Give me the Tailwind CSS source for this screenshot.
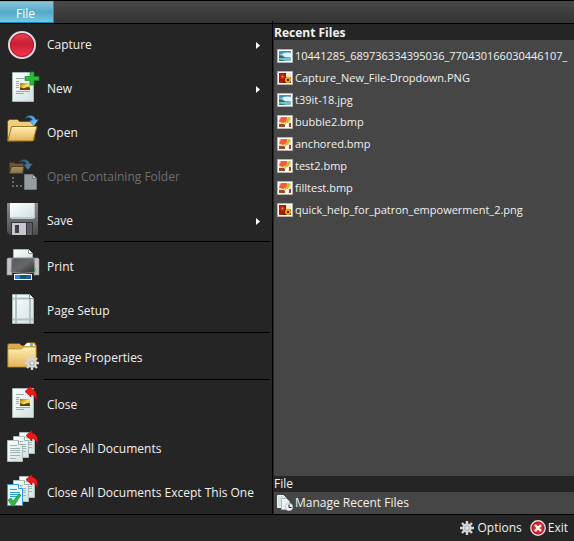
<!DOCTYPE html>
<html lang="en">
<head>
<meta charset="utf-8">
<meta name="viewport" content="width=device-width, initial-scale=1">
<title>File menu</title>
<script src="https://cdn.jsdelivr.net/npm/@tailwindcss/browser@4"></script>
</head>
<body class="flex min-h-screen flex-col bg-[#252525] font-['Open_Sans','Noto_Sans',sans-serif] text-[12px] leading-4 text-[#f1f1f1]">

<svg class="absolute size-0" aria-hidden="true">
  <defs>
    <linearGradient id="paper" x1="0" y1="0" x2="1" y2="1"><stop offset="0" stop-color="#fbffff"/><stop offset="1" stop-color="#d3e1e1"/></linearGradient>
    <linearGradient id="gold" x1="0" y1="0" x2="0" y2="1"><stop offset="0" stop-color="#ffeeb0"/><stop offset="1" stop-color="#e3b45a"/></linearGradient>
    <linearGradient id="red" x1="0" y1="0" x2="0" y2="1"><stop offset="0" stop-color="#f0485a"/><stop offset=".45" stop-color="#c81e36"/><stop offset="1" stop-color="#ff3852"/></linearGradient>
    <linearGradient id="blue" x1="0" y1="0" x2="1" y2="1"><stop offset="0" stop-color="#2b86c8"/><stop offset="1" stop-color="#8fd4ff"/></linearGradient>
    <linearGradient id="steel" x1="0" y1="0" x2="0" y2="1"><stop offset="0" stop-color="#8d8d8f"/><stop offset="1" stop-color="#4b4b4e"/></linearGradient>
    <linearGradient id="body" x1="0" y1="0" x2="1" y2="1"><stop offset="0" stop-color="#58585c"/><stop offset=".5" stop-color="#66666a"/><stop offset="1" stop-color="#29292b"/></linearGradient>
    <linearGradient id="photo" x1="0" y1="0" x2="1" y2="1"><stop offset="0" stop-color="#9a7400"/><stop offset=".55" stop-color="#ffe45c"/><stop offset="1" stop-color="#a06c08"/></linearGradient>
    <symbol id="arrow-red" viewBox="0 0 12 16"><path d="M0 5.500 6 0v3c4.500.5 6.500 5 5.500 12C10.500 11 9 8.500 6 8.500V11Z" fill="#f41616" stroke="#9d0505" stroke-width=".6"/></symbol>
    <symbol id="arrow-blue" viewBox="0 0 14 12"><path d="M0 3.500C3-.8 9-.8 10.500 4.500H13.500L9 11 4.500 5.500 7.300 5C6 2.300 3 2 0 3.500Z" fill="url(#blue)" stroke="#16598f" stroke-width=".6"/></symbol>
    <symbol id="sheet" viewBox="0 0 22 30"><path d="M.5.500h21v29H.5Z" fill="url(#paper)" stroke="#a5b7b7"/><path d="M4 6.500h8M4 9.500h3M4 11.500h3M4 13.500h3M4 15.500h3M4 19.500h14M4 21.500h8" stroke="#9aa9a9"/><path d="M8 11h10v7H8Z" fill="url(#photo)"/><path d="M8 15q3 2 6 .5t4 1V18H8Z" fill="#654400"/></symbol>
    <symbol id="copy" viewBox="0 0 16 22"><path d="M.5.500h11l4 4v17H.5Z" fill="url(#paper)" stroke="#a9bbbb"/><path d="M11.500.500v4h4" fill="#fff" stroke="#9aacac"/><path d="M3 5.500h7M3 8.500h10M3 10.500h10M3 12.500h10M3 15.500h10M3 18.500h6" stroke="#a3b2b2"/></symbol>
    <symbol id="gear" viewBox="0 0 14 14"><path d="M7 0v14M0 7h14M2 2l10 10M12 2 2 12" stroke="#d5d7da" stroke-width="2.400"/><circle cx="7" cy="7" r="4.600" fill="#d5d7da"/><circle cx="7" cy="7" r="2.600" fill="#a4a6a9"/><circle cx="7" cy="7" r="1.700" fill="#eceef0"/></symbol>
    <symbol id="chevron" viewBox="0 0 4 7"><path d="M0 0 4 3.500 0 7Z" fill="#fff"/></symbol>
    <symbol id="lake" viewBox="0 0 16 14"><path d="M.5.500h15v13H.5Z" fill="#fff" stroke="#b4b4b4"/><path d="M2 2h12v10H2Z" fill="#7cc0ea"/><path d="M2 2h12v1.500H8L4 5H2Z" fill="#3d8fd0"/><path d="M5 5q4-2 9-1v4H8Z" fill="#e4f6ff"/><path d="M2 6q3 0 6 2.500l6 .5H2Z" fill="#28754b"/><path d="M2 9h12v3H2Z" fill="#79bfd4"/><path d="M2 10.500q4 0 7 1.500H2Z" fill="#2b7c5c"/></symbol>
    <symbol id="flower" viewBox="0 0 16 14"><path d="M.5.500h15v13H.5Z" fill="#fff" stroke="#b4b4b4"/><path d="M2 2h12v10H2Z" fill="#7a2010"/><path d="M9 2h5v4.500H9Z" fill="#f5e7c6"/><circle cx="5" cy="5.500" r="3" fill="#cc1f0e"/><circle cx="5.500" cy="5.500" r="1" fill="#e8a50d"/><circle cx="11" cy="9" r="3" fill="#f5a90b"/><circle cx="11" cy="9" r="1.200" fill="#56210a"/><path d="M2 9h4v3H2Z" fill="#a3200f"/></symbol>
    <symbol id="paint" viewBox="0 0 16 14"><path d="M.5.500h15v13H.5Z" fill="#fff" stroke="#b4b4b4"/><path d="M2 2h12v10H2Z" fill="#ecdcc4"/><path d="M4 2h6v4L6 8 2 6.500Z" fill="#fa5936"/><path d="m11 2 3 1-4 6-3 1Z" fill="#c9be28"/><path d="M2 9h5l2 3H2Z" fill="#9a4a22"/><path d="m9 8 3 1-1 3H8Z" fill="#fff"/><path d="M12 8h2v4h-2Z" fill="#b73c24"/></symbol>
  </defs>
</svg>

<header class="flex h-6 shrink-0 border-y border-black bg-linear-to-b from-[#484848] to-[#333]">
  <button type="button" class="w-[54px] border-r border-[#1c8fbb] bg-linear-to-b from-[#8cc8dd] from-0% via-[#55a9c8] via-50% to-[#78cbe4] pt-1 pr-0.5 text-center text-white shadow-[inset_0_1px_0_#5cb8d6,inset_0_-1px_0_#1789b5]">File</button>
</header>

<main class="flex min-h-0 flex-1">
  <nav aria-label="File" class="-mt-[3px] w-[273px] shrink-0 border-r border-black">
    <ul>
      <li><button type="button" class="flex h-11 w-full items-center gap-2 pr-3 pl-[7px] text-left">
        <svg class="size-8" viewBox="0 0 32 32"><circle cx="15" cy="18" r="13" fill="url(#red)" stroke="#dedede" stroke-width="2"/><circle cx="15" cy="18" r="11.500" fill="none" stroke="#a71c2f"/></svg>
        <span class="flex-1 pt-1">Capture</span><svg class="mt-1 h-[7px] w-1"><use href="#chevron"/></svg></button></li>
      <li><button type="button" class="flex h-11 w-full items-center gap-2 pr-3 pl-[7px] text-left">
        <svg class="size-8 overflow-visible" viewBox="0 0 32 32"><use href="#sheet" x="5" y="1" width="22" height="30"/><path d="M23 1h4v4.500h5v4h-5V14h-4V9.500h-5v-4h5Z" fill="#2abb38" stroke="#15872a" stroke-width=".7"/></svg>
        <span class="flex-1 pt-1">New</span><svg class="mt-1 h-[7px] w-1"><use href="#chevron"/></svg></button></li>
      <li><button type="button" class="flex h-11 w-full items-center gap-2 pr-3 pl-[7px] text-left">
        <svg class="size-8" viewBox="0 0 32 32"><path d="M.5 26V6.500l2-2h8l2 2h15V25Z" fill="#efcf7f" stroke="#79560f"/><path d="M4.500 11.500h25.500l-4 14.500H.8Z" fill="url(#gold)" stroke="#9c7120"/><path d="M5.500 12.500h23" stroke="#fff3c5"/><use href="#arrow-blue" x="18" y="0" width="14" height="12"/></svg>
        <span class="flex-1 pt-1">Open</span></button></li>
      <li><button type="button" disabled class="flex h-11 w-full items-center gap-2 pr-3 pl-[7px] text-left text-[#6f6f6f]">
        <svg class="size-8" viewBox="0 0 32 32"><g opacity=".55"><path d="M2.500 3.500h5l1 1h8v10h-14Z" fill="#a9853b" stroke="#604517"/><path d="M4.500 7.500h12.500l-1.500 7H2.500Z" fill="url(#gold)" stroke="#74541d"/><use href="#arrow-blue" x="12" y="0" width="14" height="12"/></g><path d="M5 18h2v2H5zM5 22h2v2H5zM5 26h2v2H5zM9 26h2v2H9zM13 26h2v2h-2z" fill="#626c6c"/><path d="M17.500 15.500h8l4 4v11h-12Z" fill="#949e9e" stroke="#6f7a7a"/><path d="M25.500 15.500v4h4" fill="#bdc5c5" stroke="#6f7a7a"/></svg>
        <span class="flex-1 pt-1">Open Containing Folder</span></button></li>
      <li><button type="button" class="flex h-11 w-full items-center gap-2 pr-3 pl-[7px] text-left">
        <svg class="size-8" viewBox="0 0 32 32"><path d="M0 0h31v32H3l-3-3Z" fill="url(#steel)"/><path d="M3 0h25v15l-2 1H5l-2-1Z" fill="#b9caca"/><path d="M3 0h24v14H3Z" fill="url(#paper)"/><path d="M4 19h22v13H4Z" fill="#343438"/><path d="M5 20h14v12H5Z" fill="#c6c6ce"/><path d="M8 22h4v8H8Z" fill="#3e3e43"/><path d="M20 20h5v12h-5Z" fill="#5b5b60"/></svg>
        <span class="flex-1 pt-1">Save</span><svg class="mt-1 h-[7px] w-1"><use href="#chevron"/></svg></button></li>
    </ul>
    <hr class="mr-0.5 mb-0.5 ml-11 border-black">
    <ul>
      <li><button type="button" class="flex h-11 w-full items-center gap-2 pr-3 pl-[7px] text-left">
        <svg class="size-8 overflow-visible" viewBox="0 0 32 32"><path d="M6.500 11V-.5h15l4 4V11Z" fill="url(#paper)" stroke="#a1b4b4"/><path d="M21.500-.5v4h4" fill="#fff" stroke="#7d9292"/><path d="M1 8h4v17H0V9ZM27 8h4l1 1v16h-5Z" fill="#c3c3c7" stroke="#8d8d91" stroke-width=".6"/><path d="M5 8h22l1 14q-12 3-24 0Z" fill="url(#body)" stroke="#8d8d91"/><path d="M7 24h18v6H7Z" fill="#f2fafa"/><path d="M8 25h5v4H8Z" fill="#3584d8"/><path d="M13 25h6v4h-6Z" fill="#185b58"/><path d="M19 25h5v4h-5Z" fill="#2259ad"/><path d="M27 18h2v2h-2Z" fill="#16e016"/></svg>
        <span class="flex-1 pt-0.5">Print</span></button></li>
      <li><button type="button" class="flex h-11 w-full items-center gap-2 pr-3 pl-[7px] text-left">
        <svg class="size-8" viewBox="0 0 32 32"><path d="M5.500.500h17l4 4v25h-21Z" fill="url(#paper)" stroke="#a1b4b4"/><path d="M9 1v28M23 4v25M6 4.500h17M6 25.500h20" stroke="#b1c1c1" stroke-width="2"/><path d="M22.500.500v4h4" fill="#fff" stroke="#7d9292"/></svg>
        <span class="flex-1 pt-0.5">Page Setup</span></button></li>
    </ul>
    <hr class="mr-0.5 mb-0.5 ml-11 border-black">
    <ul>
      <li><button type="button" class="flex h-11 w-full items-center gap-2 pr-3 pl-[7px] text-left">
        <svg class="size-8" viewBox="0 0 32 32"><path d="M.5 26V3.500l2-1h10l2 2h3l3-3h7l2 3V26Z" fill="#d9aa50" stroke="#79560f"/><path d="M17 5l3-3h6l2 3Z" fill="#fff"/><path d="M23 2h3v3h-3Z" fill="#47bce9"/><path d="M1 8h13l3-2h12v20H1Z" fill="url(#gold)" stroke="#a97d2b" stroke-width=".6"/><use href="#gear" x="18" y="15" width="14" height="14"/></svg>
        <span class="flex-1 pt-0.5">Image Properties</span></button></li>
    </ul>
    <hr class="mr-0.5 mb-0.5 ml-11 border-black">
    <ul>
      <li><button type="button" class="flex h-11 w-full items-center gap-2 pr-3 pl-[7px] text-left">
        <svg class="size-8 overflow-visible" viewBox="0 0 32 32"><use href="#sheet" x="5" y="0" width="22" height="30"/><use href="#arrow-red" x="18" y="-2" width="12" height="16"/></svg>
        <span class="flex-1 pt-0.5">Close</span></button></li>
      <li><button type="button" class="flex h-11 w-full items-center gap-2 pr-3 pl-[7px] text-left">
        <svg class="size-8 overflow-visible" viewBox="0 0 32 32"><use href="#copy" x="12" y="0" width="16" height="22"/><use href="#copy" x="6" y="4" width="16" height="22"/><use href="#copy" x="0" y="8" width="16" height="22"/><use href="#arrow-red" x="19" y="-2" width="12" height="16"/></svg>
        <span class="flex-1 pt-0.5">Close All Documents</span></button></li>
      <li><button type="button" class="flex h-11 w-full items-center gap-2 pr-3 pl-[7px] text-left">
        <svg class="size-8 overflow-visible" viewBox="0 1 32 32"><use href="#copy" x="12" y="1" width="16" height="22"/><use href="#copy" x="6" y="5" width="16" height="22"/><path d="M.5 9.500h11l4 4v17H.5Z" fill="#e8f8ff" stroke="#2c9de0"/><path d="M11.500 9.500v4h4" fill="#fff" stroke="#2c9de0"/><path d="M3 14.500h7M3 17.500h10M3 19.500h10M3 21.500h10" stroke="#2c9de0"/><path d="m1 25 3-2 2 3 6-7 2 1-7 11H5Z" fill="#30b945" stroke="#178229" stroke-width=".6"/><use href="#arrow-red" x="19" y="-1" width="12" height="16"/></svg>
        <span class="flex-1 pt-0.5 whitespace-nowrap">Close All Documents Except This One</span></button></li>
    </ul>
  </nav>

  <section aria-label="Recent Files" class="flex min-w-0 flex-1 flex-col pl-px">
    <h2 class="h-4 pt-px font-bold">Recent Files</h2>
    <ul class="flex-1 bg-[#464646] pt-[5px] pl-[3px] text-[11px]">
      <li><a href="#" class="flex h-[22px] items-center gap-0.5 whitespace-nowrap"><svg class="h-3.5 w-4 shrink-0"><use href="#lake"/></svg>10441285_689736334395036_770430166030446107_</a></li>
      <li><a href="#" class="flex h-[22px] items-center gap-0.5"><svg class="h-3.5 w-4 shrink-0"><use href="#flower"/></svg>Capture_New_File-Dropdown.PNG</a></li>
      <li><a href="#" class="flex h-[22px] items-center gap-0.5"><svg class="h-3.5 w-4 shrink-0"><use href="#lake"/></svg>t39it-18.jpg</a></li>
      <li><a href="#" class="flex h-[22px] items-center gap-0.5"><svg class="h-3.5 w-4 shrink-0"><use href="#paint"/></svg>bubble2.bmp</a></li>
      <li><a href="#" class="flex h-[22px] items-center gap-0.5"><svg class="h-3.5 w-4 shrink-0"><use href="#paint"/></svg>anchored.bmp</a></li>
      <li><a href="#" class="flex h-[22px] items-center gap-0.5"><svg class="h-3.5 w-4 shrink-0"><use href="#paint"/></svg>test2.bmp</a></li>
      <li><a href="#" class="flex h-[22px] items-center gap-0.5"><svg class="h-3.5 w-4 shrink-0"><use href="#paint"/></svg>filltest.bmp</a></li>
      <li><a href="#" class="flex h-[22px] items-center gap-0.5"><svg class="h-3.5 w-4 shrink-0"><use href="#flower"/></svg>quick_help_for_patron_empowerment_2.png</a></li>
    </ul>
    <h2 class="h-4">File</h2>
    <button type="button" class="flex h-[22px] items-center gap-0.5 bg-[#464646] pl-[3px] text-left">
      <svg class="size-4" viewBox="0 0 16 16"><path d="M.5.500h6l2 2v10h-8Z" fill="#d4e2e2" stroke="#f2f8f8"/><path d="M4.500 3.500h5l3 3v8h-8Z" fill="url(#paper)" stroke="#a8baba"/><circle cx="12" cy="12" r="3.700" fill="#ecf0f4" stroke="#b3bcc2" stroke-width=".6"/><path d="M12 9.500V12.500h2.500" fill="none" stroke="#222"/></svg>Manage Recent Files</button>
  </section>
</main>

<footer class="flex h-7 shrink-0 items-center justify-end gap-2 border-y border-black pr-1.5">
  <button type="button" class="flex items-center gap-[3px]"><svg class="size-3.5"><use href="#gear"/></svg>Options</button>
  <button type="button" class="flex items-center gap-0.5"><svg class="size-4" viewBox="0 0 16 16"><circle cx="8" cy="8" r="7.200" fill="#d72a2f" stroke="#eadfdf" stroke-width="1.400"/><circle cx="8" cy="8" r="5.900" fill="none" stroke="#a50f16" stroke-width=".7"/><path d="m5 5 6 6M11 5l-6 6" stroke="#fff" stroke-width="2.400"/></svg>Exit</button>
</footer>
</body>
</html>
